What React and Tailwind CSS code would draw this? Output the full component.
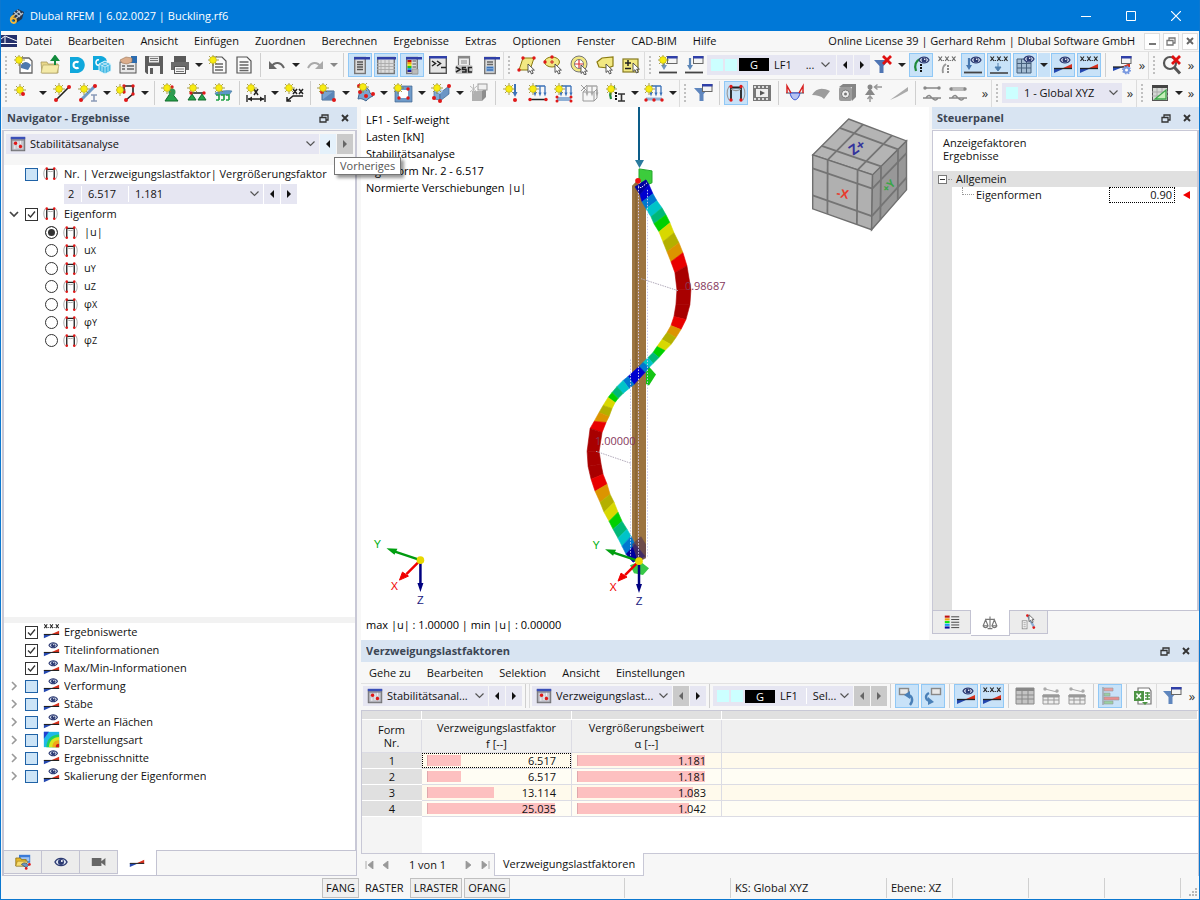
import React from "react";

/* ---------- drawing primitives for the 20x20 icons ---------- */

const Svg = ({ children, s = 20 }) => (
  <svg viewBox="0 0 20 20" width={s} height={s} className="shrink-0" aria-hidden="true">
    {children}
  </svg>
);
const Star = ({ x = 5, y = 5 }) => (
  <g transform={`translate(${x} ${y})`}>
    <path d="M0-6V6M-6 0H6M-4-4L4 4M4-4L-4 4" stroke="#8f8420" strokeWidth=".8" />
    <circle r="3.400" fill="#f8ec10" stroke="#c0b020" strokeWidth=".6" />
  </g>
);
const Dot = ({ x, y, r = 1.7, c = "#e01818" }) => <circle cx={x} cy={y} r={r} fill={c} />;
const Cursor = ({ x = 11, y = 9 }) => (
  <path transform={`translate(${x} ${y})`} d="M0 0v8.500l2-1.800 1.500 3.300 1.700-.8-1.500-3.100h2.700z" fill="#fff" stroke="#444" strokeWidth=".9" />
);
const Eye = ({ x = 13, y = 5 }) => (
  <g transform={`translate(${x} ${y})`}>
    <path d="M-5 0C-3-4 3-4 5 0 3 4-3 4-5 0z" fill="#dfe6f4" stroke="#2c3a72" strokeWidth="1.200" />
    <circle r="2.500" fill="#2c3a72" />
    <circle cx=".7" cy="-.8" r=".8" fill="#fff" />
  </g>
);
const XXX = ({ c = "#222", y = 7 }) => (
  <g stroke={c} strokeWidth="1.200" fill="none">
    {[1.5, 8.200, 15].map((x) => (
      <path key={x} d={`M${x} ${y - 4.500}l3.500 4.500m0-4.500l-3.500 4.500`} />
    ))}
    <path d={`M6.300 ${y - 1}v1M13.200 ${y - 1}v1`} />
  </g>
);
const Diag = () => (
  <>
    <path d="M1 13.500h10L1 18z" fill="#2448b0" />
    <path d="M9 13.500h10V9z" fill="#d8301c" />
    <path d="M1 13.500h18" stroke="#222" strokeWidth="1.300" />
  </>
);
const Win = ({ x = 9, y = 1 }) => (
  <g transform={`translate(${x} ${y})`}>
    <rect x=".5" y=".5" width="9.500" height="7" fill="#f4f4f4" stroke="#666" />
    <path d="M0 0h10.500v2.500H0z" fill="#2f3fa8" />
  </g>
);
const Sheet = ({ x = 4, y = 2, w = 13, h = 16, head = "#2f3fa8" }) => (
  <g transform={`translate(${x} ${y})`}>
    <rect x=".7" y=".5" width={w - 0.4} height={h} fill="#dcdcdc" stroke="#777" strokeWidth="1.400" />
    <path d={`M0 0h${w + 1}v2.500H0z`} fill={head} />
  </g>
);
const Frame = () => (
  <>
    <path d="M5 17V4.500h10V17" fill="none" stroke="#222" strokeWidth="1.800" />
    <path d="M3 3.500C0 8 1 14 3 17M17 3.500c3 4.500 2 10.500 0 13.500M5 6c3 2 7 2 10 0" fill="none" stroke="#999" strokeWidth="1.100" />
    <Dot x="5" y="3.500" /><Dot x="15" y="3.500" /><Dot x="5" y="17" /><Dot x="15" y="17" />
  </>
);
const Load = ({ c = "#4878b0", x = 6 }) => (
  <>
    <path d={`M${x} 3v9`} stroke={c} strokeWidth="2.200" />
    <path d={`M${x - 3} 10h6l-3 5z`} fill={c} />
    <path d="M1 17.500h18" stroke="#444" strokeWidth="1.800" />
  </>
);
const Funnel = ({ c = "#5076b4" }) => <path d="M1 5h15l-5.500 6v7h-4v-7z" fill={c} />;
const RedX = ({ x = 9, y = 0 }) => (
  <path transform={`translate(${x} ${y})`} d="M1 1l8 8M9 1l-8 8" stroke="#e01010" strokeWidth="2.800" />
);
const Support = () => (
  <>
    <path d="M9 4c-4 2-6 6-4 12" fill="none" stroke="#1d8a3a" strokeWidth="2.200" />
    <path d="M10 9v9" stroke="#111" strokeWidth="2" strokeDasharray="2 1" />
  </>
);
const Arrows3 = ({ c = "#3c72b8" }) => (
  <>
    <path d="M7 3h10M7 3v8M12 3v8M17 3v8" stroke={c} strokeWidth="1.300" fill="none" />
    <path d="M5.500 9.500h3l-1.500 4zM10.500 9.500h3l-1.500 4zM15.500 9.500h3l-1.500 4z" fill={c} />
  </>
);
const Box3 = () => (
  <>
    <path d="M3 8l6 3v6l-6-1z" fill="#7fa8d4" stroke="#4a6f9c" strokeWidth=".7" />
    <path d="M9 10l9-7v8l-9 7z" fill="#6b96c6" stroke="#41668f" strokeWidth=".7" />
    <path d="M3 8l5-4 4 4-3 3z" fill="#b4d0ec" />
  </>
);

const I = {
  newDoc: <><path d="M6 3h9l3 3v12H6z" fill="#fff" stroke="#666" strokeWidth="1.300" /><path d="M7 10c3-4 6-4 10 0l-3 5-7-2z" fill="#4f79ad" /><Star x="5" y="5" /></>,
  open: <><path d="M1 7h6l1 2h10v9H2z" fill="#e9d88a" stroke="#a89a5c" strokeWidth=".8" /><path d="M3 10h16l-2 8H1z" fill="#f4eaa8" stroke="#a89a5c" strokeWidth=".6" /><path d="M15 10V4M12 5l3-4 3 4z" stroke="#118a3c" strokeWidth="2" fill="#118a3c" /></>,
  cloudC: <><path d="M4 2h8c9 2 9 14 0 16H4z" fill="#10a8dc" /><path d="M12.500 7.500c-1-1-5-1-5 2.500s4 3.500 5 2.500" stroke="#fff" strokeWidth="2" fill="none" /></>,
  cloudCube: <><path d="M1 1h8c6 1 7 6 5 11l-3 3H1z" fill="#10a8dc" /><path d="M7 5c-2-.5-3 .5-3 2.500s1 3 3 2.500" stroke="#fff" strokeWidth="1.500" fill="none" /><path d="M13 6l6 3v7l-6 3-6-3V9z" fill="#40b8e4" stroke="#eaf8fd" /><path d="M7 9l6 3 6-3M13 12v7M10 7.500l6 3v6M16 7.500l-6 3v6" stroke="#eaf8fd" fill="none" strokeWidth=".7" /></>,
  hand: <><rect x="2" y="7" width="16" height="11" fill="#e8e8e8" stroke="#555" /><path d="M4 11h3M9 11h7M4 14h3M9 14h7" stroke="#666" strokeWidth="1.300" /><path d="M13 1h6v7h-6z" fill="#2c6cb0" /><path d="M2 5l6-3 6 1v4l-5 2-5-1z" fill="#dcae8c" stroke="#9b7355" strokeWidth=".6" /></>,
  save: <><path d="M1 1h18v18H3l-2-2z" fill="#5d5d5d" /><rect x="5" y="1.500" width="10" height="6" fill="#e9e9e9" /><path d="M6 3.500h8M6 5.500h8" stroke="#777" /><rect x="4" y="11" width="12" height="8" fill="#f5f5f5" /><rect x="6" y="13" width="3" height="6" fill="#5d5d5d" /></>,
  print: <><path d="M4 1h12v6H4z" fill="#5a5a5a" /><path d="M1 7h18v8H1z" fill="#6b6b6b" /><rect x="4.500" y="11.500" width="11" height="7" fill="#f4f4f4" stroke="#555" /><path d="M6 14h8M6 16.500h8" stroke="#777" /></>,
  newRep: <><path d="M5 2h9l4 4v12H5z" fill="#fafafa" stroke="#555" strokeWidth="1.200" /><path d="M7 9h8M7 12h8M7 15h8" stroke="#666" strokeWidth="1.400" /><Star x="5" y="5" /></>,
  rep: <><path d="M3 2h10l4 4v12H3z" fill="#fafafa" stroke="#555" strokeWidth="1.200" /><path d="M5.500 7h9M5.500 10h9M5.500 13h9M5.500 15.500h9" stroke="#666" strokeWidth="1.300" /></>,
  undo: <><path d="M4 12C8 6 14 7 17 13" fill="none" stroke="#666" strokeWidth="2" /><path d="M2 6v8h8z" fill="#666" /></>,
  redo: <><path d="M16 12C12 6 6 7 3 13" fill="none" stroke="#aaa" strokeWidth="2" /><path d="M18 6v8h-8z" fill="#aaa" /></>,
  navi: <><Sheet x="4" w="11" /><path d="M7 7h6M7 9.500h6M7 12h6M7 14.500h6" stroke="#555" strokeWidth="1.300" /></>,
  table: <><Sheet x="1" w="17" h="16" /><path d="M1 8.500h18M1 11.500h18M1 14.500h18M5 5v13M9 5v13M13 5v13" stroke="#aaa" strokeWidth=".9" /></>,
  colors: <><Sheet x="4" w="11" />{["#c01010", "#f0a010", "#e8e820", "#20c020", "#20a0e0", "#2020a0"].map((c, k) => <rect key={c} x="5.500" y={5 + k * 2} width="4" height="2" fill={c} />)}<path d="M10.500 6h3.500M10.500 9h3.500M10.500 12h3.500M10.500 15h3.500" stroke="#555" /><path d="M10 14h6v5h-6z" fill="#bbb" stroke="#888" strokeWidth=".6" /></>,
  console: <><rect x="1.700" y="1.700" width="16.600" height="16.600" fill="#e4e4e4" stroke="#555" strokeWidth="1.400" /><path d="M1 1h18v2.500H1z" fill="#2f3fa8" /><path d="M4 6l3.500 2.500L4 11M9 6l3.500 2.500L9 11M13 12.500h5" fill="none" stroke="#222" strokeWidth="1.500" /></>,
  sc: <><rect x="4.500" y="1.500" width="11" height="10" fill="#eee" stroke="#777" strokeWidth="1.200" /><path d="M4 1h12v2.500H4z" fill="#888" /><path d="M7 6h6M7 8h6" stroke="#888" /><rect x="1" y="10" width="18" height="9" rx="3" fill="#c8c8c8" /><path d="M2 12l4 2.500L2 17M12 12.500H8.500v2H12V17H8M18 12.500h-3.500V17H18" stroke="#222" strokeWidth="1.500" fill="none" /></>,
  list: <><Sheet x="4" w="11" /><path d="M7 7h6M7 9.500h6" stroke="#666" strokeWidth="1.300" /><path d="M6 11.500h8v5H6z" fill="#8fb4dc" /><path d="M7 12.500h6M7 15h6" stroke="#3c72b8" strokeWidth="1.300" /></>,
  selQuad: <><path d="M6 3h11l-4 12H2z" fill="#f2e882" stroke="#8a7a10" /><Dot x="6" y="3" /><Dot x="17" y="3" /><Dot x="2" y="15" /><Cursor /></>,
  selEll: <><ellipse cx="9" cy="7" rx="7.500" ry="5" fill="#f2e882" stroke="#8a7a10" /><Dot x="9" y="2" /><Dot x="2" y="7" /><path d="M9 5v4M7 7h4" stroke="#c22" /><Cursor x="12" /></>,
  selCirc: <><circle cx="10" cy="9" r="8" fill="#f2e882" stroke="#777" /><circle cx="10" cy="9" r="4.500" fill="#fff" stroke="#777" /><path d="M10 5v8M6 9h8" stroke="#d33" strokeWidth="1.200" /><Cursor x="12" y="10" /></>,
  selPoly: <><path d="M2 7l5-4 11-1v9l-5 2-9-1z" fill="#f2e882" stroke="#8a7a10" strokeWidth="1.200" /><Cursor /></>,
  selPM: <><rect x="2" y="4" width="15" height="13" fill="#f2e882" stroke="#857a20" strokeWidth="1.200" /><path d="M4 8h6M7 5v6M4 13.500h6" stroke="#222" strokeWidth="1.500" /><Cursor x="12" y="8" /></>,
  loadStar: <><Load c="#7495bd" /><Win /><Star x="5" y="5" /></>,
  loadWin: <><Load c="#5d87b8" /><Win /></>,
  filterX: <><Funnel /><RedX /></>,
  eyeSup: <><Support /><Eye /></>,
  xSup: <><path d="M9 9c-3 2-4 4-3 9" fill="none" stroke="#999" strokeWidth="2" /><path d="M11 10v8" stroke="#888" strokeWidth="2" strokeDasharray="2 1" /><XXX c="#666" y={6} /></>,
  loadEye: <><Load /><Eye /></>,
  loadX: <><path d="M9 8v6M6 12h6l-3 4z" stroke="#5080b0" fill="#5080b0" /><path d="M1 18h18" stroke="#444" strokeWidth="1.600" /><XXX y={6} /></>,
  gridEye: <><path d="M2 4h14v14H2z" fill="#a4bcd2" /><path d="M2 8.500h14M2 13h14M6.500 4v14M11.500 4v14M2 4h14v14H2z" stroke="#47617c" fill="none" /><Eye x={14} y={4} /></>,
  diagEye: <><Diag /><Eye x={12} y={5} /></>,
  diagX: <><Diag /><XXX y={6} /></>,
  diagSet: <><path d="M1 12h10L1 16z" fill="#2448b0" /><path d="M9 12h9V8z" fill="#d8301c" /><path d="M1 12h15" stroke="#222" strokeWidth="1.300" /><Win /><circle cx="14.500" cy="15" r="3.500" fill="#7a9ae0" stroke="#7a9ae0" strokeWidth="2" strokeDasharray="1.500 1.200" /><circle cx="14.500" cy="15" r="1.500" fill="#fff" /></>,
  magX: <><circle cx="8" cy="8" r="6" fill="#f7f7f7" stroke="#555" strokeWidth="2.200" /><path d="M12.500 12.500l5.500 6" stroke="#555" strokeWidth="3" /><RedX x={9} y={0} /></>,

  node: <><Star x={6} y={7} /><Dot x="9" y="11" r="2" /></>,
  line: <><path d="M4 17L17 4" stroke="#222" strokeWidth="1.600" /><Dot x="4" y="17" r="2" /><Dot x="17" y="4" r="2" /><Star x={7} y={6} /></>,
  member: <><path d="M3 17L17 3" stroke="#6f9bc8" strokeWidth="3" /><Dot x="3" y="17" r="2" /><Dot x="17" y="3" r="2" /><path d="M13 12h6M13 18h6M16 12v6" stroke="#8a9ab8" strokeWidth="1.600" /><Star x={6} y={6} /></>,
  poly: <><path d="M8 9V3h9v8l-7 6" fill="none" stroke="#222" strokeWidth="1.600" /><Dot x="8" y="3" /><Dot x="17" y="3" /><Dot x="17" y="11" /><Dot x="10" y="17" r="2" /><Dot x="8" y="9" /><Star x={4} y={7} /></>,
  sup1: <><path d="M10 9l7 9H4z" fill="#25a34a" stroke="#126a2c" /><circle cx="11" cy="9" r="3.500" fill="#2f9a50" /><Dot x="11" y="4" /><Star x={6} y={5} /></>,
  sup2: <><path d="M4 10h13" stroke="#222" strokeWidth="1.500" /><path d="M5 11l4 6H1zM15 11l4 6h-8z" fill="#25a34a" stroke="#126a2c" /><Dot x="4" y="10" /><Dot x="17" y="10" /><Star x={6} y={5} /></>,
  sup3: <><path d="M2 10c4-2 12-3 17-2l-3 4H3z" fill="#5c97c8" stroke="#3f749c" strokeWidth=".6" /><path d="M3 12h3v5M8 12h3v5M13 12h3v5M3 17h3M8 17h3M13 17h3" stroke="#25a34a" fill="none" strokeWidth="1.700" /><Star x={6} y={5} /></>,
  dimX: <><path d="M1 12v7M19 12v7M2 16h16" stroke="#222" strokeWidth="1.400" /><path d="M2 16l4-2.500v5zM18 16l-4-2.500v5z" fill="#222" /><path d="M8 6l4 6m0-6l-4 6" stroke="#222" strokeWidth="1.500" /><Star x={5} y={5} /></>,
  dimXX: <><path d="M3 18l6-5h10M3 14v4h4" stroke="#222" strokeWidth="1.500" fill="none" /><path d="M9 6l4 5m0-5l-4 5M15 6l4 5m0-5l-4 5" stroke="#222" strokeWidth="1.500" /><Star x={5} y={5} /></>,
  surf: <><path d="M5 8h12v9H5z" fill="#7aa4d0" stroke="#41668f" /><path d="M5 17l12-9v9z" fill="#5b86b8" /><Dot x="17" y="17" r="2" /><Dot x="5" y="9" r="2" /><Star x={6} y={5} /></>,
  surfR: <><path d="M5 7c5-5 9-2 10 3l3 3c-3 1-5 3-7 5-3-2-5-3-8-2z" fill="#7aa4d0" stroke="#41668f" /><Dot x="4" y="3" r="2" /><Dot x="11" y="13" r="2" /><Dot x="18" y="11" r="2" /><Dot x="5" y="9" r="2" /><Star x={8} y={4} /></>,
  opening: <><path d="M4 5h13v12H4z" fill="#fff" stroke="#6f9ac8" strokeWidth="4" /><path d="M2 3h17v16H2z" fill="none" stroke="#41668f" strokeWidth=".7" /><Dot x="15" y="6" /><Dot x="15" y="15" /><Dot x="6" y="15" /><Dot x="6" y="7" /><Star x={5} y={5} /></>,
  solid: <><Box3 /><Dot x="18" y="3" r="2" /><Dot x="9" y="18" r="2" /><Dot x="3" y="15" r="2" /><Star x={6} y={5} /></>,
  solidG: <><path d="M3 8h10v10H3z" fill="#b0b0b0" /><path d="M13 8l4-3v9l-4 4z" fill="#8d8d8d" /><rect x="9" y="1" width="9" height="6" fill="#f0f0f0" stroke="#999" /><path d="M1 3l7 6M8 3L1 9M4.500 1v10" stroke="#bbb" /></>,
  ld1: <><path d="M13 1v10" stroke="#3c72b8" strokeWidth="2" /><path d="M10.500 9h5l-2.500 5z" fill="#3c72b8" /><Dot x="13" y="17" r="2" /><Star x={7} y={6} /></>,
  ld2: <><Arrows3 /><path d="M2 16.500h16" stroke="#222" strokeWidth="1.500" /><Dot x="2" y="16.500" /><Dot x="18" y="16.500" /><Star x={5} y={6} /></>,
  ld3: <><Arrows3 /><path d="M3 14h14v4H3z" fill="#8fb0d6" /><Dot x="3" y="14" r="1.500" /><Dot x="17" y="14" r="1.500" /><Dot x="3" y="18" r="1.500" /><Dot x="17" y="18" r="1.500" /><Star x={5} y={6} /></>,
  ld4: <><Arrows3 c="#aaa" /><path d="M3 9v9h11l3-3V7M3 9h11v9M14 9l3-3M3 9l3-3M1 2l6 6M7 2L1 8" fill="none" stroke="#999" /></>,
  imp: <><Support /><path d="M12 11h7M12 18h7M15.500 11v7" stroke="#333" strokeWidth="1.600" /><Star x={5} y={6} /></>,
  ld5: <><Arrows3 /><path d="M2 16h16" stroke="#8fb0d6" strokeWidth="3" /><Dot x="2" y="17" /><Dot x="10" y="17" /><Dot x="18" y="17" /><Star x={5} y={6} /></>,
  funWin: <><Funnel c="#5f86be" /><Win /></>,
  frame: <Frame />,
  film: <><path d="M1 2h18v16H1z" fill="#777" /><path d="M4 6h12v8H4z" fill="#eee" /><path d="M8 7.500l5 2.500-5 2.500z" fill="#555" /><path d="M2 4h16M2 16h16" stroke="#fff" strokeWidth="1.500" strokeDasharray="2 2" /></>,
  graph: <><path d="M1 10h18" stroke="#445" /><path d="M5 10c2 9 8 9 10 0z" fill="#b8c4f2" stroke="#2c4cd0" /><path d="M2 10V3l4 7M18 10V3l-4 7" stroke="#d82020" strokeWidth="1.500" fill="none" /></>,
  surfG: <path d="M1 12c4-7 10-8 18-4l-6 8c-3-3-7-4-12-4z" fill="#9c9c9c" />,
  cubeG: <><rect x="2" y="4" width="13" height="14" rx="2" fill="#9c9c9c" /><path d="M2 4l4-3h13v13l-4 4V4z" fill="#858585" /><circle cx="8.500" cy="11" r="4" fill="#eee" stroke="#777" /><circle cx="8.500" cy="11" r="1.500" fill="#777" /></>,
  arrG: <><path d="M7 5l5 7H2z" fill="#888" /><circle cx="7" cy="4" r="2.500" fill="#888" /><path d="M12 4h7M14.500 1.500l-3 2.500 3 2.500M7 19v-5M4.500 16l2.500-3 2.500 3" stroke="#999" fill="none" strokeWidth="1.500" /></>,
  wedgeG: <path d="M1 17L19 4v4L8 14z" fill="#aaa" />,
  res1: <><path d="M2 5h16" stroke="#888" strokeWidth="1.500" /><Dot x="3" y="5" c="#888" /><Dot x="17" y="5" c="#888" /><path d="M1 15h18M4 15c3-5 5-1 6 0s4 4 6 0" stroke="#888" fill="none" strokeWidth="1.500" /></>,
  res2: <><path d="M3 4h14v4H3z" fill="#bbb" /><Dot x="3" y="6" c="#888" /><Dot x="17" y="6" c="#888" /><path d="M1 15h18M4 15c3-5 5-1 6 0s4 4 6 0" stroke="#888" fill="none" strokeWidth="1.500" /></>,
  plan: <><rect x="2.500" y="2.500" width="15" height="15" fill="#d4d8d4" stroke="#555" /><path d="M2 2h16v3H2z" fill="#444" /><path d="M2 9h16M2 13h16M7 5v12M12 5v12" stroke="#aaa" /><path d="M5 16h11V7z" fill="#c4f0b8" stroke="#3ba648" strokeWidth="1.300" /></>,

  back: <><rect x="2.500" y="2.500" width="9" height="6" fill="#e8e8e8" stroke="#888" strokeWidth="1.400" /><path d="M10 9c5 0 7 5 3 10" stroke="#4a80b8" strokeWidth="2.400" fill="none" /><path d="M13 5v8L7 9z" fill="#4a80b8" /></>,
  fwd: <><rect x="8.500" y="2.500" width="9" height="6" fill="#e8e8e8" stroke="#888" strokeWidth="1.400" /><path d="M6 7c-4 2-4 6 0 8" stroke="#4a80b8" strokeWidth="2.400" fill="none" /><path d="M5 19v-8l6 5z" fill="#4a80b8" /></>,
  tblG: <><path d="M1 2h18v16H1z" fill="#c4c4c4" stroke="#888" /><path d="M1 2h18v3H1z" fill="#888" /><path d="M1 9h18M1 13h18M7 5v13M13 5v13" stroke="#888" /></>,
  tblA: <><path d="M2 9h16v9H2z" fill="#eee" stroke="#999" /><path d="M2 9h16v2H2zM2 14h16M7 9v9M13 9v9" stroke="#999" fill="#999" /><path d="M4 3l12 3" stroke="#aaa" /><Dot x="4" y="3" c="#aaa" /><Dot x="16" y="5" c="#aaa" /></>,
  bars: <><path d="M3 1v18" stroke="#888" /><path d="M4 2h9v3H4z" fill="#e9a0a0" stroke="#999" strokeWidth=".6" /><path d="M4 7h6v3H4z" fill="#98d0a4" stroke="#999" strokeWidth=".6" /><path d="M4 11h15v3H4z" fill="#e88f8f" stroke="#999" strokeWidth=".6" /><path d="M4 15h9v3H4z" fill="#98d0a4" stroke="#999" strokeWidth=".6" /></>,
  xls: <><path d="M5 2h11l2 3v13H5z" fill="#fff" stroke="#777" strokeWidth="1.200" /><path d="M1 5h10v10H1z" fill="#4d9444" /><path d="M3.500 7.500l4.500 5m0-5l-4.500 5" stroke="#fff" strokeWidth="1.500" /><path d="M12 7h5M12 10h5M12 13h5M14.500 6v8" stroke="#4d9444" strokeWidth="1.400" /><path d="M9 16h6l-3 3z" fill="#4d9444" /></>,
  stab: <><rect x="1.500" y="2" width="17" height="16.500" fill="#8f8f98" stroke="#666" /><path d="M1 1h18v3H1z" fill="#3a4fb8" /><path d="M3 6h14v11H3z" fill="#c8c8d0" /><Dot x="7" y="9" r="2.200" /><Dot x="13" y="13" r="2.200" /><path d="M13 6v4M6 12v4M10 7v8" stroke="#fff" /></>,
  openData: <><path d="M5 1h14v10H5z" fill="#3a7ad8" /><path d="M7 4h11v5H7z" fill="#9fc4f4" /><path d="M1 5h6l1 2h6v8H1z" fill="#e8b92c" stroke="#8d6e14" /><path d="M3 9h13l-3 6H1z" fill="#f8dc70" stroke="#8d6e14" strokeWidth=".6" /><path d="M8 13c3-3 6-2 9 1l-3 3z" fill="#6b96c6" stroke="#456" /><Dot x="18" y="13" /><Dot x="14" y="18" /></>,
  eye: <g transform="translate(10 10) scale(1.500)"><Eye x={0} y={0} /></g>,
  cam: <path d="M1 5h12v10H1zM13 9l5-4v10l-5-4z" fill="#666" />,
  diag: <g transform="translate(0 -3)"><Diag /></g>,
  legend: <>{["#c01010", "#f0a010", "#10e810", "#10a0f0", "#0808a0"].map((c, k) => <rect key={c} x="1" y={2 + k * 3.400} width="6" height="2.600" fill={c} />)}<path d="M9 3.500h10M9 6.900h10M9 10.300h10M9 13.700h10M9 17h10" stroke="#444" strokeWidth="1.200" /></>,
  scale: <path d="M10 2v14M4 5.500h12M7 17h6M4.500 6l-3 7.500h6zM15.500 6l-3 7.500h6zM1.500 13.500c1 3 5 3 6 0M12.500 13.500c1 3 5 3 6 0" fill="none" stroke="#777" strokeWidth="1.400" />,
  pick: <><rect x="1.500" y="8.500" width="6" height="10" fill="#fff" stroke="#888" /><path d="M3 11h3M3 13.500h3M3 16h3" stroke="#888" /><path d="M9 3l7 13" stroke="#8fb0d6" strokeWidth="3" /><Dot x="8" y="2" /><Dot x="16" y="17" /><Cursor x={10} y={1} /></>,
  iso: <><path d="M1 1h18v18H1z" fill="#20b8e8" /><path d="M4 19C4 10 10 4 19 4v15z" fill="#20d060" /><path d="M7 19c0-7 5-12 12-12v12z" fill="#d8e820" /><path d="M11 19c0-5 3-8 8-8v8z" fill="#f0a818" /><path d="M15 19c0-3 1-4 4-4v4z" fill="#d01818" /><path d="M1 1h6L1 9z" fill="#2040d0" /></>,
};

/* ---------- controls ---------- */

const Btn = ({ i, on, off, s = 20, label }) => (
  <button
    aria-label={label || i}
    disabled={off}
    className={
      "mx-px flex h-6 w-6 shrink-0 items-center justify-center border " +
      (on ? "border-[#90c8f6] bg-[#c8e2f8]" : "border-transparent")
    }
  >
    <Svg s={s}>{I[i]}</Svg>
  </button>
);
const Drop = ({ off }) => (
  <button aria-label="Auswahl öffnen" className="flex h-6 w-3 shrink-0 items-center justify-center">
    <svg width="8" height="4" viewBox="0 0 8 4" aria-hidden="true"><path d="M0 0h8L4 4z" fill={off ? "#888" : "#222"} /></svg>
  </button>
);
const Sep = () => (
  <div className="flex h-6 w-[7px] shrink-0 justify-center"><div className="w-px bg-[#cfcfcf]" /></div>
);
const More = () => (
  <button aria-label="Weitere" className="h-6 w-3 shrink-0 text-center text-[13px] leading-5 text-[#333]">»</button>
);
const Grip = () => (
  <svg width="10" height="20" viewBox="0 0 10 20" className="shrink-0" aria-hidden="true">
    {[1, 5, 9, 13, 17].map((y) => <rect key={y} x="4" y={y} width="2" height="2" fill="#c0c0c0" />)}
  </svg>
);
const Bar = ({ children, grow }) => (
  <div className={"flex h-7 shrink-0 items-center border-r border-[#dcdcdc] pb-0.5 " + (grow ? "grow" : "")}>
    <Grip />
    {children}
  </div>
);
const Chevron = () => (
  <svg width="9" height="6" viewBox="0 0 9 6" className="pointer-events-none shrink-0" aria-hidden="true">
    <path d="M.5.5l4 4 4-4" fill="none" stroke="#555" strokeWidth="1.200" />
  </svg>
);
const Step = ({ dir, off, hot, label }) => (
  <button
    aria-label={label}
    disabled={off}
    className={
      "ml-px flex h-5 w-4 shrink-0 items-center justify-center " +
      (off ? "bg-[#cacaca]" : hot ? "bg-[#e5f1fb]" : "bg-[#e6e6f2]")
    }
  >
    <svg width="4" height="8" viewBox="0 0 4 8" aria-hidden="true">
      <path d={dir === "l" ? "M4 0v8L0 4z" : "M0 0v8l4-4z"} fill={off ? "#666" : "#111"} />
    </svg>
  </button>
);
const Pick = ({ value, icon, children, w, label }) => (
  <div className={"flex h-5 items-center bg-[#e6e6f2] pr-1 pl-1 " + w}>
    {icon && <Svg s={16}>{I[icon]}</Svg>}
    {children}
    <select aria-label={label} className="ml-1 min-w-0 grow appearance-none bg-transparent outline-none">
      <option>{value}</option>
    </select>
    <Chevron />
  </div>
);
const Swatches = () => (
  <>
    <span className="h-3 w-3 shrink-0 bg-[#ccffff]" />
    <span className="ml-0.5 h-3 w-3 shrink-0 bg-[#ccffff]" />
  </>
);
const Case = () => <span className="w-[30px] shrink-0 bg-black text-center leading-[13px] text-white">G</span>;

const Restore = ({ c = "#333" }) => (
  <svg width="10" height="9" viewBox="0 0 10 9" aria-hidden="true">
    <path d="M3 3V1h6v5H7M1 3.500h6V8H1z" fill="none" stroke={c} strokeWidth="1.300" />
  </svg>
);
const Cross = ({ c = "#333" }) => (
  <svg width="8" height="8" viewBox="0 0 8 8" aria-hidden="true">
    <path d="M1 1l6 6M7 1L1 7" stroke={c} strokeWidth="1.900" />
  </svg>
);
const Head = ({ children }) => (
  <header className="flex h-[22px] shrink-0 items-center bg-[#d8e4f2] pr-2 pl-[5px]">
    <h2 className="grow truncate font-bold text-[#3c4654]">{children}</h2>
    <button aria-label="Andocken" className="mr-3"><Restore /></button>
    <button aria-label="Schließen"><Cross /></button>
  </header>
);

/* ---------- navigator ---------- */

const Check = ({ id, state }) => (
  <span className="grid h-[13px] w-[13px] shrink-0">
    <input
      id={id}
      type="checkbox"
      defaultChecked={state === "on"}
      className={
        "h-[13px] w-[13px] appearance-none border [grid-area:1/1] " +
        (state === "on" ? "border-[#333] bg-white" : "border-[#1f62a6] bg-[#cce4f7]")
      }
    />
    {state === "on" && (
      <svg viewBox="0 0 13 13" className="pointer-events-none [grid-area:1/1]" aria-hidden="true">
        <path d="M3 6.500l2.500 2.500L10 3.500" fill="none" stroke="#333" strokeWidth="1.300" />
      </svg>
    )}
  </span>
);
const Fold = ({ kind }) => (
  <span className="flex w-[21px] shrink-0 items-center pl-[5px]">
    {kind && (
      <button aria-label="Aufklappen">
        <svg width="10" height="10" viewBox="0 0 10 10" aria-hidden="true">
          {kind === "open"
            ? <path d="M1 3l4 4 4-4" fill="none" stroke="#444" strokeWidth="1.700" />
            : <path d="M3 1l4 4-4 4" fill="none" stroke="#999" strokeWidth="1.600" />}
        </svg>
      </button>
    )}
  </span>
);
const Node = ({ id, fold, state, icon, children }) => (
  <li className="flex h-[18px] items-center">
    <Fold kind={fold} />
    <Check id={id} state={state} />
    <span className="ml-[5px] flex w-[21px] shrink-0 pb-0.5"><Svg s={icon === "frame" ? 15 : 17}>{I[icon]}</Svg></span>
    <label htmlFor={id} className="truncate">{children}</label>
  </li>
);
const MODES = [["|u|", ""], ["u", "X"], ["u", "Y"], ["u", "Z"], ["φ", "X"], ["φ", "Y"], ["φ", "Z"]];
const OPTIONS = [
  ["Ergebniswerte", "on", "diagX"],
  ["Titelinformationen", "on", "diagEye"],
  ["Max/Min-Informationen", "on", "diagEye"],
  ["Verformung", "", "diagEye"],
  ["Stäbe", "", "diagEye"],
  ["Werte an Flächen", "", "diagEye"],
  ["Darstellungsart", "", "iso"],
  ["Ergebnisschnitte", "", "diagEye"],
  ["Skalierung der Eigenformen", "", "diagEye"],
];
const Tab = ({ i, active, label }) => (
  <button
    role="tab"
    aria-label={label}
    aria-selected={!!active}
    className={
      "flex items-center justify-center border-r border-b border-[#c3c3d2] " +
      (active ? "h-[26px] w-[39px] bg-white" : "h-6 w-[38px] border-t bg-[#ececec]")
    }
  >
    <Svg s={16}>{I[i]}</Svg>
  </button>
);

const Navigator = () => (
  <aside className="flex w-[355px] shrink-0 flex-col">
    <Head>Navigator - Ergebnisse</Head>
    <div className="mt-px flex min-h-0 grow flex-col border-x-2 border-t border-[#c8c8d6] bg-white">
      <div className="relative flex h-[34px] shrink-0 items-start bg-[#f6f6f6] px-0.5 pt-[3px]">
        <Pick w="grow" icon="stab" value="Stabilitätsanalyse" label="Analyse" />
        <Step dir="l" hot label="Vorheriges" />
        <Step dir="r" off label="Nächstes" />
        <div role="tooltip" className="absolute top-[26px] left-[330px] z-10 border border-[#767676] bg-white px-[5px] whitespace-nowrap text-[#555] shadow-[3px_3px_3px_rgba(0,0,0,0.4)]">
          Vorheriges
        </div>
      </div>
      <ul className="grow">
        <Node id="nr" state="" icon="frame">Nr. | Verzweigungslastfaktor| Vergrößerungsfaktor</Node>
        <li className="ml-[60px] flex h-[22px] items-center">
          <button aria-haspopup="listbox" aria-label="Eigenform Nr." className="flex h-5 w-[199px] items-center bg-[#e6e6f2] pr-1 text-left">
            <span className="w-[18px] border-r border-white pl-1">2</span>
            <span className="w-[47px] border-r border-white pl-1.5">6.517</span>
            <span className="grow pl-1.5">1.181</span>
            <Chevron />
          </button>
          <Step dir="l" label="Vorherige Eigenform" />
          <Step dir="r" label="Nächste Eigenform" />
        </li>
        <Node id="ef" fold="open" state="on" icon="frame">Eigenform</Node>
        {MODES.map(([a, b], k) => (
          <li key={a + b} className="flex h-[18px] items-center pl-[41px]">
            <input
              id={"m" + k}
              name="mode"
              type="radio"
              defaultChecked={k === 0}
              className="h-[13px] w-[13px] appearance-none rounded-full border border-[#333] bg-white checked:bg-[#333] checked:shadow-[inset_0_0_0_2px_#fff]"
            />
            <span className="ml-[5px] flex w-[21px] shrink-0"><Svg s={15}>{I.frame}</Svg></span>
            <label htmlFor={"m" + k}>{a}<span className="text-[9px]">{b}</span></label>
          </li>
        ))}
      </ul>
      <div className="h-[6px] shrink-0 bg-[#f2f2f2]" />
      <ul className="h-[227px] shrink-0">
        {OPTIONS.map(([t, s, i], k) => (
          <Node key={t} id={"o" + k} fold={k > 2 ? "shut" : ""} state={s} icon={i}>{t}</Node>
        ))}
      </ul>
    </div>
    <div role="tablist" className="flex h-[26px] shrink-0 border-b border-l-2 border-[#c3c3d2] bg-[#f7f7f7]">
      <Tab i="openData" label="Daten" />
      <Tab i="eye" label="Anzeigen" />
      <Tab i="cam" label="Ansichten" />
      <Tab i="diag" active label="Ergebnisse" />
      <div className="grow border-t border-r border-[#c3c3d2]" />
    </div>
  </aside>
);

/* ---------- model view ---------- */

const N = "#0000a0", B = "#0000d0", D = "#0078d0", C = "#00c4c8", T = "#00b878", G = "#00d000",
  Y = "#d8d800", O = "#b4b000", R = "#dc9400", E = "#e80000", K = "#a80000";
/* each section: left x, left y, right x, right y, colour up to the next section */
const MODE = [
  [635, 187, 646, 180, N], [640, 195, 649, 185, B], [642, 202, 653, 194, D], [646, 209, 657, 201, C],
  [651, 217, 662, 208, T], [654, 224, 666, 215, G], [659, 232, 670, 223, Y], [663, 242, 674, 233, O],
  [667, 252, 679, 243, R], [671, 262, 683, 253, E], [675, 273, 687, 266, K], [677, 290, 691, 290, K],
  [676, 305, 690, 305, K], [674, 317, 686, 320, E], [671, 326, 681, 330, R], [667, 333, 676, 338, O],
  [662, 340, 671, 345, Y], [657, 347, 665, 351, G], [653, 353, 659, 358, T], [648, 358, 653, 364, C],
  [643, 363, 649, 368, D], [639, 367, 645, 373, B], [628, 377, 634, 385, D], [623, 381, 629, 389, C],
  [617, 387, 623, 394, T], [612, 393, 618, 399, G], [608, 398, 615, 403, Y], [603, 406, 612, 409, O],
  [599, 413, 609, 417, R], [594, 422, 606, 423, E], [590, 429, 602, 433, K], [587, 452, 599, 452, K],
  [588, 467, 601, 465, K], [591, 480, 603, 475, E], [595, 492, 607, 485, R], [600, 503, 610, 495, O],
  [604, 513, 614, 503, Y], [609, 522, 618, 513, G], [613, 530, 622, 522, T], [618, 539, 627, 530, C],
  [622, 547, 631, 537, D], [626, 555, 635, 545, N], [633, 563, 645, 557, N],
];

const Axes = ({ x, y }) => (
  <g transform={`translate(${x} ${y})`} fontFamily="Liberation Sans" fontSize="11" textAnchor="middle">
    <path d="M0 0L-27-9" stroke="#009a10" strokeWidth="2.500" />
    <path d="M-34-12l11 .5-3 6z" fill="#00a010" />
    <path d="M0 0l-14 14" stroke="#f00000" strokeWidth="2.500" />
    <path d="M-21 20l3-8 6 4z" fill="#f00000" stroke="#f00000" />
    <path d="M0 0v24" stroke="#000080" strokeWidth="2.500" />
    <path d="M-3 23h6l-3 9z" fill="#000080" />
    <circle r="3.800" fill="#e8d800" />
    <text x="-43" y="-12" fill="#00b010">Y</text>
    <text x="-26" y="30" fill="#f00000">X</text>
    <text x="0" y="44" fill="#202080">Z</text>
  </g>
);

const mix = (p, q, t) => [p[0] + (q[0] - p[0]) * t, p[1] + (q[1] - p[1]) * t];
const Face = ({ a, b, c, d, fill }) => {
  const lines = [0.25, 0.75].flatMap((t) => [[mix(a, b, t), mix(d, c, t)], [mix(a, d, t), mix(b, c, t)]]);
  return (
    <g>
      <polygon points={[a, b, c, d].join(" ")} fill={fill} stroke="#6f6f6f" strokeWidth="1.400" />
      {lines.map(([p, q], k) => (
        <line key={k} x1={p[0]} y1={p[1]} x2={q[0]} y2={q[1]} stroke="#747474" strokeWidth="1.800" />
      ))}
    </g>
  );
};
const Cube = () => (
  <g fontFamily="Open Sans" fontWeight="700" fontSize="12" textAnchor="middle">
    <Face a={[849, 119]} b={[907, 141]} c={[873, 175]} d={[813, 155]} fill="#b4b4b4" />
    <Face a={[813, 155]} b={[873, 175]} c={[872, 230]} d={[813, 209]} fill="#b0b0b0" />
    <Face a={[873, 175]} b={[907, 141]} c={[907, 190]} d={[872, 230]} fill="#989898" />
    <text x="843" y="198" fill="#e83a2c" transform="rotate(10 843 194)">-X</text>
    <text x="889" y="190" fontSize="11" fill="#3ba648" transform="rotate(-45 889 186)">+Y</text>
    <text x="858" y="152" fontSize="14" fill="#32329c" transform="rotate(-35 858 148)">Z+</text>
  </g>
);

const View = () => (
  <main className="relative flex min-w-0 grow flex-col justify-between overflow-hidden bg-white px-[5px] pt-1 pb-[7px] text-black">
    <svg className="absolute inset-0 h-full w-full" viewBox="361 107 568 534" role="img" aria-label="Eigenform 2">
      <path d="M639 107v54" stroke="#0c5c88" strokeWidth="2" />
      <path d="M635 160h9l-4.500 8z" fill="#2a7a9e" />
      <path d="M639 169l13 2v12l-8 3-5-6z" fill="#3ccc3c" stroke="#22a82a" />
      <path d="M648 366l8 9-7 11-6-3z" fill="#14c414" />
      <path d="M630 566l10-4 9 7-6 7-9-2z" fill="#38c848" />
      <path d="M632 186l4-4 10 6v370l-6 4-8-6z" fill="#9c7440" />
      <path d="M636 183v377" stroke="#8d6836" strokeWidth="2" />
      {MODE.slice(0, -1).map((p, k) => {
        const q = MODE[k + 1];
        return <polygon key={k} points={`${p[0]},${p[1]} ${p[2]},${p[3]} ${q[2]},${q[3]} ${q[0]},${q[1]}`} fill={p[4]} stroke={p[4]} strokeWidth=".6" />;
      })}
      <circle cx="638" cy="181" r="2.800" fill="#f01010" />
      <path d="M638 186l3 2 6-5" stroke="#fff" fill="none" strokeDasharray="1.500 1" />
      <path d="M632 545l9-8 5 8v14l-8 4z" fill="#5a3c50" opacity=".7" />
      <path d="M638.500 187v373" stroke="#d6cce8" strokeDasharray="1.500 1.500" />
      <path d="M630.500 360v200M647.500 190v368" stroke="#c8c8ec" strokeDasharray="1.500 1.500" />
      <path d="M641 279l37 12M596 452l35 12" stroke="#b0a8b8" strokeDasharray="1.500 1" fill="none" />
      <g fontFamily="Open Sans" fontSize="11" fill="#86385c">
        <text x="685" y="290">0.98687</text>
        <text x="595" y="446">1.00000</text>
      </g>
      <Axes x={420} y={561} />
      <Axes x={639} y={562} />
      <Cube />
    </svg>
    <div className="relative leading-[17px]">
      <p>LF1 - Self-weight</p>
      <p>Lasten [kN]</p>
      <p>Stabilitätsanalyse</p>
      <p>Eigenform Nr. 2 - 6.517</p>
      <p>Normierte Verschiebungen |u|</p>
    </div>
    <p className="relative leading-[17px]">max |u| : 1.00000 | min |u| : 0.00000</p>
  </main>
);

/* ---------- control panel ---------- */

const ControlPanel = () => (
  <aside className="flex w-[267px] shrink-0 flex-col">
    <Head>Steuerpanel</Head>
    <div className="mt-px flex grow flex-col border border-r-2 border-b-0 border-[#c8c8d6] bg-white">
      <div className="h-10 shrink-0 pt-[5px] pl-2.5 leading-[13px]">
        <p>Anzeigefaktoren</p>
        <p>Ergebnisse</p>
      </div>
      <div className="flex h-4 shrink-0 items-center bg-[#e0e0e0] pl-[5px]">
        <button aria-label="Zuklappen" className="flex h-[9px] w-[9px] items-center justify-center border border-[#777] bg-white">
          <span className="h-px w-[5px] bg-[#333]" />
        </button>
        <span className="mr-1 ml-px w-1 border-t border-dotted border-[#999]" />
        <h3>Allgemein</h3>
      </div>
      <div className="flex grow items-start border-l-[19px] border-[#e0e0e0]">
        <div className="flex h-4 grow items-center">
          <span className="ml-2.5 h-2 w-3 self-start border-b border-l border-dotted border-[#999]" />
          <label htmlFor="factor" className="ml-0.5 grow truncate">Eigenformen</label>
          <input id="factor" defaultValue="0.90" className="h-4 w-[66px] border border-dotted border-black bg-white pr-0.5 text-right outline-none" />
          <svg width="7" height="8" viewBox="0 0 7 8" className="mr-[7px] ml-2" aria-hidden="true"><path d="M7 0v8L0 4z" fill="#f00000" /></svg>
        </div>
      </div>
    </div>
    <div role="tablist" className="flex h-[30px] shrink-0 items-start bg-[#f7f7f7]">
      <div className="h-6 border-l border-[#c3c3d2]" />
      <Tab i="legend" label="Farbskala" />
      <Tab i="scale" active label="Faktoren" />
      <Tab i="pick" label="Filter" />
      <div className="grow border-t border-[#c3c3d2]" />
    </div>
  </aside>
);

/* ---------- result table ---------- */

const ROWS = [
  ["1", "6.517", 34, "1.181", 128],
  ["2", "6.517", 34, "1.181", 128],
  ["3", "13.114", 67, "1.083", 116],
  ["4", "25.035", 128, "1.042", 112],
];
const Value = ({ text, bar, focus }) => (
  <td className="border-r border-b border-[#dcdce4] p-0">
    <div className={"grid h-[15px] items-center border pr-[14px] pl-1 " + (focus ? "border-dotted border-black" : "border-transparent")}>
      <span className="h-[11px] border-l border-[#e0a8ac] bg-[#fdc0c0] [grid-area:1/1]" style={{ width: bar }} />
      <span className="text-right leading-[13px] [grid-area:1/1]">{text}</span>
    </div>
  </td>
);

const Results = () => (
  <section className="flex h-[236px] shrink-0 flex-col border-r border-[#c8c8d6]">
    <Head>Verzweigungslastfaktoren</Head>
    <nav className="flex h-[21px] shrink-0 items-center gap-4 pl-2">
      {["Gehe zu", "Bearbeiten", "Selektion", "Ansicht", "Einstellungen"].map((t) => <button key={t}>{t}</button>)}
    </nav>
    <div className="flex h-[27px] shrink-0 items-center overflow-hidden border-t border-[#e2e2e2] pb-0.5 pl-0.5">
      <Pick w="w-[125px] shrink-0" icon="stab" value="Stabilitätsanal..." label="Analyse" />
      <Step dir="l" label="Vorherige Analyse" /><Step dir="r" label="Nächste Analyse" />
      <Sep /><span className="w-[3px] shrink-0 self-stretch border-l border-[#dcdcdc]" />
      <Pick w="w-[140px] shrink-0" icon="stab" value="Verzweigungslast..." label="Tabelle" />
      <Step dir="l" off label="Vorherige Tabelle" /><Step dir="r" label="Nächste Tabelle" />
      <Sep />
      <button aria-haspopup="listbox" aria-label="Lastfall" className="flex h-5 w-[140px] shrink-0 items-center bg-[#e6e6f2] pr-1 pl-1">
        <Swatches />
        <span className="w-0.5" /><Case />
        <span className="ml-[5px] border-r border-white pr-2">LF1</span>
        <span className="grow pl-1.5 text-left">Sel...</span>
        <Chevron />
      </button>
      <Step dir="l" off label="Vorheriger Lastfall" /><Step dir="r" off label="Nächster Lastfall" />
      <Sep /><Btn i="back" on /><Btn i="fwd" on />
      <Sep /><Btn i="diagEye" on /><Btn i="diagX" on />
      <Sep /><Btn i="tblG" off /><Btn i="tblA" off /><Btn i="tblA" off label="tblB" />
      <Sep /><Btn i="bars" on />
      <Sep /><Btn i="xls" />
      <span className="w-[3px] shrink-0 self-stretch border-l border-[#dcdcdc]" />
      <Btn i="funWin" /><span className="grow" /><More />
    </div>
    <div className="grow border-y border-l border-[#c8c8d6] bg-[linear-gradient(to_right,#f4f4f4_60px,#ffffff_60px)]">
      <table className="w-full table-fixed border-separate border-spacing-0">
        <colgroup><col className="w-[60px]" /><col className="w-[150px]" /><col className="w-[150px]" /><col /></colgroup>
        <thead>
          <tr>
            {[0, 1, 2, 3].map((k) => <td key={k} className="h-[9px] border-r border-b border-white bg-[#e0e0e0] p-0" />)}
          </tr>
          <tr className="bg-[#f0f0f0]">
            <th className="h-8 border-r border-b border-[#dcdce4] p-0 leading-[13px] font-normal">Form<br />Nr.</th>
            <th className="border-r border-b border-[#dcdce4] p-0 leading-4 font-normal">Verzweigungslastfaktor<br />f [--]</th>
            <th className="border-r border-b border-[#dcdce4] p-0 leading-4 font-normal">Vergrößerungsbeiwert<br />α [--]</th>
            <th className="border-b border-[#dcdce4]" aria-label="leer" />
          </tr>
        </thead>
        <tbody>
          {ROWS.map(([n, f, fw, a, aw], k) => (
            <tr key={n} className={k % 2 ? "bg-[#fffdf4]" : "bg-[#fffaec]"}>
              <th className="border-b border-white bg-[#e0e0e0] p-0 leading-[15px] font-normal">{n}</th>
              <Value text={f} bar={fw} focus={k === 0} />
              <Value text={a} bar={aw} />
              <td className="border-b border-[#dcdce4]" />
            </tr>
          ))}
        </tbody>
      </table>
    </div>
    <footer className="flex h-[22px] shrink-0 items-center pl-1">
      {["M1 0v8M8 0v8L3 4z", "M6 0v8L1 4z"].map((d) => (
        <button key={d} aria-label="Zurück" className="mr-2"><svg width="9" height="8" viewBox="0 0 9 8" aria-hidden="true"><path d={d} fill="#999" stroke="#999" strokeWidth=".8" /></svg></button>
      ))}
      <span className="w-[57px] text-center">1 von 1</span>
      {["M2 0v8l5-4z", "M1 0v8l5-4zM8 0v8"].map((d) => (
        <button key={d} aria-label="Weiter" className="ml-2"><svg width="9" height="8" viewBox="0 0 9 8" aria-hidden="true"><path d={d} fill="#999" stroke="#999" strokeWidth=".8" /></svg></button>
      ))}
      <button className="-mt-px ml-1 h-[23px] border border-t-0 border-[#c8c8d6] bg-white px-2">Verzweigungslastfaktoren</button>
    </footer>
  </section>
);

/* ---------- window ---------- */

const MENU = ["Datei", "Bearbeiten", "Ansicht", "Einfügen", "Zuordnen", "Berechnen", "Ergebnisse", "Extras", "Optionen", "Fenster", "CAD-BIM", "Hilfe"];
const Cell = ({ w, children }) => <span className={"h-5 shrink-0 truncate border-l border-[#d0d0d0] pl-1 leading-5 " + w}>{children}</span>;

export default function App() {
  return (
    <div className="flex h-screen w-full flex-col overflow-hidden border-x border-b border-[#0c78d0] bg-[#f7f7f7] font-['Open_Sans','Noto_Sans',sans-serif] text-[11px] leading-4 text-[#111]">
      <header className="flex h-[31px] shrink-0 items-center bg-[#0078d7] text-white">
        <svg width="16" height="16" viewBox="0 0 16 16" className="ml-2 shrink-0" aria-hidden="true">
          <path d="M4 5l5-4 6 3-2 7-6 4-4-4z" fill="#24344c" />
          <path d="M5 4l6 5M8 2l5 5M4 8l7-5M6 11l8-6" stroke="#b4c0cc" strokeWidth="1.200" />
          <path d="M5.500 7.500C2 8 1.500 11 2 13c1 3 5 2.500 5-.500 0-2.500-3.500-3-5-.8" fill="none" stroke="#f0b83c" strokeWidth="1.900" />
        </svg>
        <h1 className="ml-[5px] grow truncate">Dlubal RFEM | 6.02.0027 | Buckling.rf6</h1>
        <button aria-label="Minimieren" className="flex h-full w-[45px] items-center justify-center"><svg width="10" height="10" viewBox="0 0 10 10"><path d="M0 5.500h10" stroke="#fff" /></svg></button>
        <button aria-label="Maximieren" className="flex h-full w-[45px] items-center justify-center"><svg width="10" height="10" viewBox="0 0 10 10"><path d="M.5.5h9v9h-9z" fill="none" stroke="#fff" /></svg></button>
        <button aria-label="Beenden" className="flex h-full w-[46px] items-center justify-center"><svg width="10" height="10" viewBox="0 0 10 10"><path d="M0 0l10 10M10 0L0 10" stroke="#fff" strokeWidth="1.200" /></svg></button>
      </header>

      <nav className="flex h-5 shrink-0 items-center">
        <svg width="16" height="12" viewBox="0 0 16 12" className="mr-2 shrink-0" aria-hidden="true">
          <path d="M0 0h16v12H0z" fill="#24306c" />
          <path d="M0 8.500h16M4 2v7M0 4l4-3 12 5" stroke="#fff" fill="none" />
        </svg>
        <div className="flex grow gap-4">{MENU.map((t) => <button key={t}>{t}</button>)}</div>
        <span className="mr-[7px]">Online License 39 | Gerhard Rehm | Dlubal Software GmbH</span>
        <button aria-label="Fenster minimieren" className="ml-0.5 flex h-[17px] w-4 items-center justify-center border border-[#ddd] bg-white"><svg width="7" height="8" viewBox="0 0 7 8"><path d="M0 7h7" stroke="#777" strokeWidth="2" /></svg></button>
        <button aria-label="Fenster wiederherstellen" className="ml-[3px] flex h-[17px] w-4 items-center justify-center border border-[#ddd] bg-white"><Restore c="#777" /></button>
        <button aria-label="Fenster schließen" className="mr-px ml-[3px] flex h-[17px] w-4 items-center justify-center border border-[#ddd] bg-white"><Cross c="#666" /></button>
      </nav>

      <div className="flex h-7 shrink-0 items-center overflow-hidden border-t border-[#e2e2e2]">
        <Bar>
          <Btn i="newDoc" /><Btn i="open" /><Btn i="cloudC" /><Btn i="cloudCube" /><Btn i="hand" /><Btn i="save" /><Btn i="print" /><Drop />
          <Btn i="newRep" /><Btn i="rep" /><Sep /><Btn i="undo" /><Drop /><Btn i="redo" off /><Drop off /><Sep />
          <Btn i="navi" on /><Btn i="table" on /><Btn i="colors" on /><Btn i="console" /><Btn i="sc" /><Btn i="list" />
        </Bar>
        <Bar><Btn i="selQuad" /><Btn i="selEll" /><Btn i="selCirc" /><Btn i="selPoly" /><Btn i="selPM" /></Bar>
        <Bar grow>
          <Btn i="loadStar" /><Btn i="loadWin" />
          <button aria-haspopup="listbox" aria-label="Lastfall" className="flex h-5 w-[129px] shrink-0 items-center bg-[#e6e6f2] pr-1.5 pl-1">
            <Swatches />
            <span className="w-0.5" /><Case />
            <span className="ml-[5px]">LF1</span>
            <span className="grow pl-3.5 text-left">...</span>
            <Chevron />
          </button>
          <Step dir="l" label="Vorheriger Lastfall" /><Step dir="r" label="Nächster Lastfall" />
          <Btn i="filterX" /><Drop />
          <Btn i="eyeSup" on /><Btn i="xSup" /><Btn i="loadEye" on /><Btn i="loadX" on />
          <Btn i="gridEye" on /><span className="bg-[#c8e2f8]"><Drop /></span>
          <Btn i="diagEye" on /><Btn i="diagX" on /><Sep /><Btn i="diagSet" /><span className="grow" /><More />
        </Bar>
        <div className="flex items-center pr-0.5 pb-0.5"><Grip /><Btn i="magX" /><More /></div>
      </div>

      <div className="flex h-7 shrink-0 items-center overflow-hidden border-t border-[#e2e2e2]">
        <Bar>
          <Btn i="node" /><Drop /><Btn i="line" /><Btn i="member" /><Drop /><Btn i="poly" /><Drop /><Sep />
          <Btn i="sup1" /><Btn i="sup2" /><Btn i="sup3" /><Sep />
          <Btn i="dimX" /><Drop /><Btn i="dimXX" /><Sep />
          <Btn i="surf" /><Drop /><Btn i="surfR" /><Drop /><Btn i="opening" /><Drop /><Btn i="solid" /><Drop /><Btn i="solidG" off /><Sep />
          <Btn i="ld1" /><Btn i="ld2" /><Btn i="ld3" /><Btn i="ld4" off /><Btn i="imp" /><Drop /><Btn i="ld5" /><Drop />
        </Bar>
        <Bar grow>
          <Btn i="funWin" /><Sep /><Btn i="frame" on /><Btn i="film" /><Sep />
          <Btn i="graph" /><Btn i="surfG" off /><Btn i="cubeG" off /><Btn i="arrG" off /><Btn i="wedgeG" off /><Sep />
          <Btn i="res1" off /><Btn i="res2" off /><span className="grow" /><More />
        </Bar>
        <Bar>
          <Pick w="w-[120px]" value="1 - Global XYZ" label="Koordinatensystem"><span className="mr-0.5 h-3 w-3 shrink-0 bg-[#ccffff]" /></Pick>
          <span className="w-0.5" /><More />
        </Bar>
        <div className="flex items-center pr-0.5 pb-0.5"><Grip /><Btn i="plan" /><Drop /><More /></div>
      </div>

      <div className="flex min-h-0 grow">
        <div className="flex pl-px"><Navigator /></div>
        <div className="ml-1 flex min-w-0 grow flex-col">
          <div className="flex min-h-0 grow">
            <View />
            <div className="ml-[3px] flex"><ControlPanel /></div>
          </div>
          <Results />
        </div>
      </div>

      <footer className="flex h-[23px] shrink-0 items-center">
        <span className="grow" />
        <div className="flex w-[302px] shrink-0 gap-0.5">
          <button className="h-5 border border-[#c0c0c0] bg-[#f0f0f0] px-[3px]">FANG</button>
          <button className="h-5 px-1">RASTER</button>
          <button className="h-5 border border-[#c0c0c0] bg-[#f0f0f0] px-[3px]">LRASTER</button>
          <button className="h-5 border border-[#c0c0c0] bg-[#f0f0f0] px-[3px]">OFANG</button>
        </div>
        <Cell w="w-[106px]" />
        <Cell w="w-[156px]">KS: Global XYZ</Cell>
        <Cell w="w-[66px]">Ebene: XZ</Cell>
        <Cell w="w-[76px]" />
        <Cell w="w-[76px]" />
        <Cell w="w-[76px]" />
        <Cell w="w-[8px]" />
        <svg width="10" height="10" viewBox="0 0 10 10" className="mt-2 mr-px" aria-hidden="true">
          <path d="M7 1h2v2H7zM4 4h2v2H4zM7 4h2v2H7zM1 7h2v2H1zM4 7h2v2H4zM7 7h2v2H7z" fill="#b8b8b8" />
        </svg>
      </footer>
    </div>
  );
}
